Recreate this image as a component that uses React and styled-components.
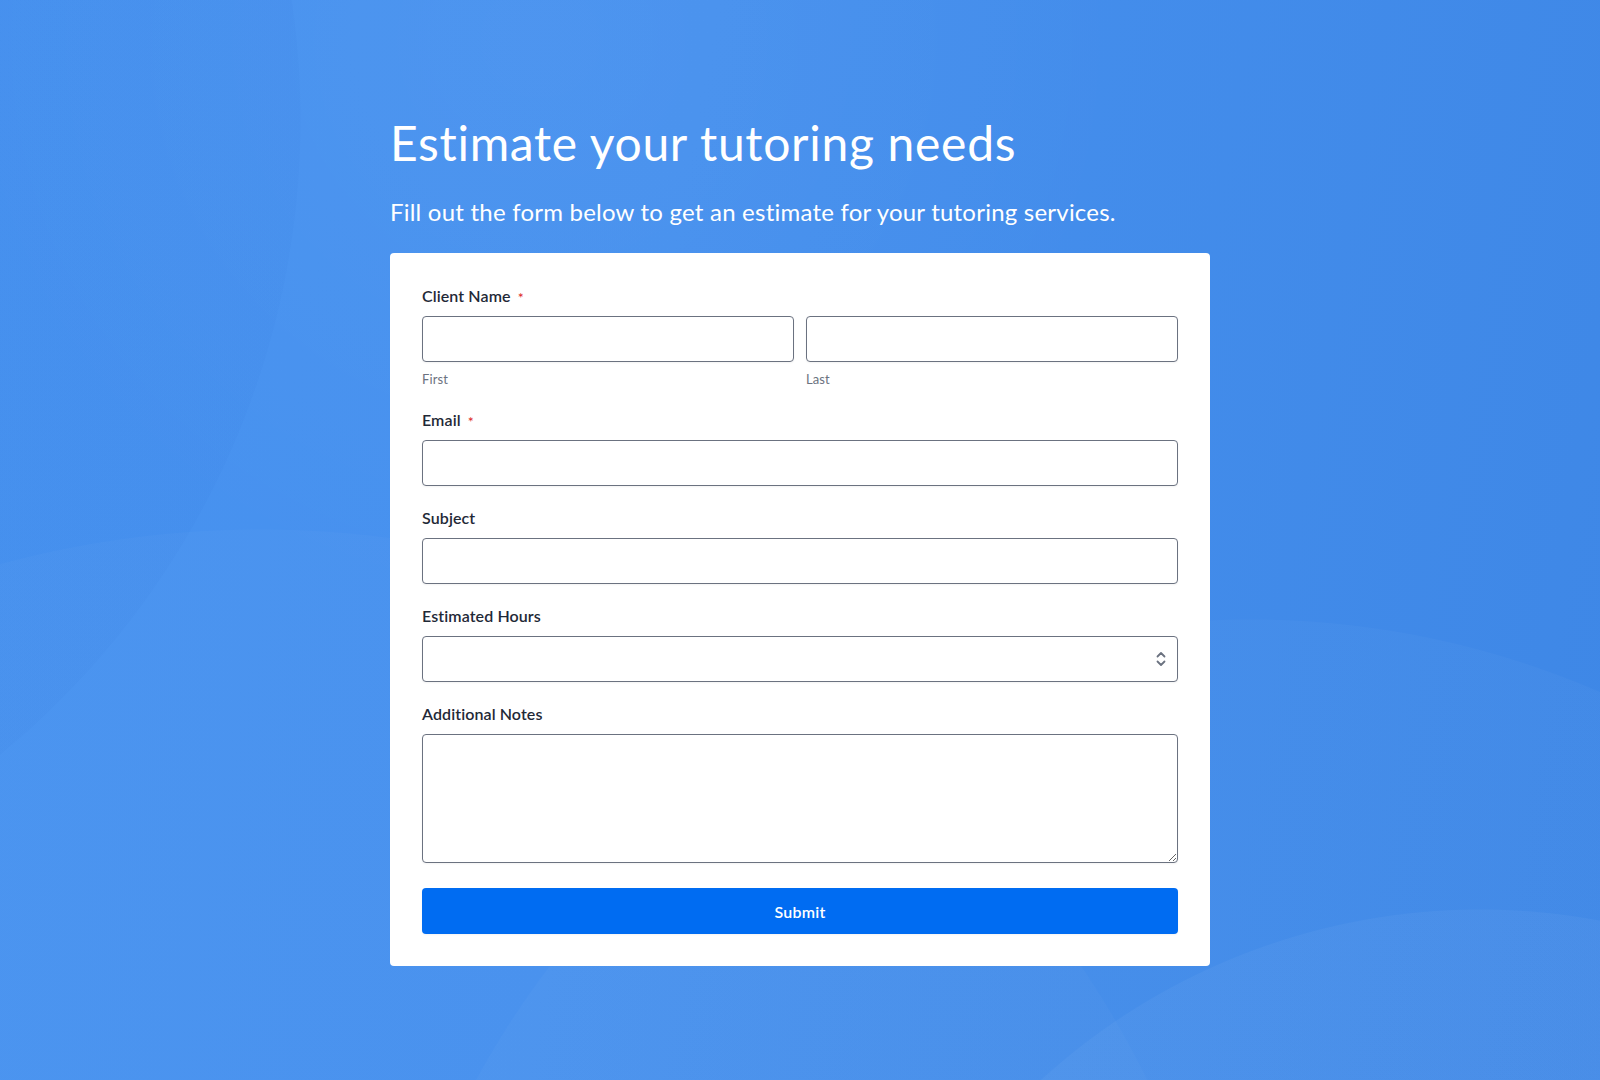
import React from 'react';
import styled, { createGlobalStyle } from 'styled-components';

const GlobalStyle = createGlobalStyle`
  * {
    box-sizing: border-box;
  }

  html, body {
    margin: 0;
    padding: 0;
  }

  body {
    font-family: Lato, "Noto Sans", sans-serif;
    -webkit-font-smoothing: antialiased;
  }
`;

const Page = styled.div`
  min-height: 1080px;
  padding: 114px 0 80px;
  background-color: #4690ee;
  background-image:
    radial-gradient(circle at 1480px 1560px, rgba(255, 255, 255, 0.035) 0 650px, rgba(255, 255, 255, 0) 651px),
    radial-gradient(circle at 1250px 1500px, rgba(255, 255, 255, 0.025) 0 880px, rgba(255, 255, 255, 0) 881px),
    radial-gradient(circle at 260px 1520px, rgba(255, 255, 255, 0.02) 0 990px, rgba(255, 255, 255, 0) 991px),
    radial-gradient(circle at -520px 120px, rgba(20, 80, 190, 0.035) 0 820px, rgba(0, 0, 0, 0) 821px),
    radial-gradient(ellipse at 540px 40px, rgba(255, 255, 255, 0.04) 0%, rgba(255, 255, 255, 0) 40%),
    linear-gradient(100deg, #4893f0 0%, #4690ee 40%, #3e87e6 100%);
`;

const Wrapper = styled.div`
  width: 820px;
  margin: 0 auto;
`;

const Title = styled.h1`
  margin: 0 0 26px;
  font-size: 48px;
  font-weight: 400;
  letter-spacing: 0.7px;
  line-height: normal;
  color: #ffffff;
`;

const Subtitle = styled.p`
  margin: 0 0 27px;
  font-size: 24px;
  font-weight: 400;
  letter-spacing: 0.22px;
  line-height: normal;
  color: #ffffff;
`;

const Card = styled.form`
  display: flex;
  flex-direction: column;
  gap: 20px;
  padding: 31px 32px 32px;
  background: #ffffff;
  border-radius: 4px;
`;

const Field = styled.div`
  display: flex;
  flex-direction: column;
  gap: 8px;
`;

const Label = styled.label`
  display: flex;
  align-items: center;
  height: 24px;
  font-size: 16px;
  font-weight: 600;
  letter-spacing: 0.1px;
  line-height: 24px;
  color: #1f2937;
`;

const Required = styled.span`
  margin-left: 7px;
  font-size: 14px;
  font-weight: 400;
  color: #dc2626;
  transform: translateY(2px);
`;

const NameRow = styled.div`
  display: grid;
  grid-template-columns: 1fr 1fr;
  gap: 12px;
`;

const NamePart = styled.div`
  display: flex;
  flex-direction: column;
  gap: 8px;
`;

const SubLabel = styled.span`
  font-size: 13px;
  letter-spacing: 0.1px;
  line-height: 18px;
  color: #6b7280;
`;

const Input = styled.input`
  width: 100%;
  height: 46px;
  padding: 0 12px;
  border: 1px solid #6b7280;
  border-radius: 4px;
  background: #ffffff;
  font-family: inherit;
  font-size: 16px;
  box-shadow: 0 1px 2px rgba(0, 0, 0, 0.05);
`;

const SelectBox = styled.div`
  position: relative;
`;

const Select = styled.select`
  width: 100%;
  height: 46px;
  padding: 0 36px 0 12px;
  border: 1px solid #6b7280;
  border-radius: 4px;
  background: #ffffff;
  font-family: inherit;
  font-size: 16px;
  appearance: none;
  box-shadow: 0 1px 2px rgba(0, 0, 0, 0.05);
`;

const SelectIcon = styled.svg`
  position: absolute;
  right: 12px;
  top: 50%;
  transform: translateY(-50%);
  pointer-events: none;
`;

const TextArea = styled.textarea`
  width: 100%;
  height: 129px;
  padding: 10px 12px;
  border: 1px solid #6b7280;
  border-radius: 4px;
  font-family: inherit;
  font-size: 16px;
  resize: vertical;
  display: block;
  box-shadow: 0 1px 2px rgba(0, 0, 0, 0.05);
`;

const SubmitButton = styled.button`
  height: 46px;
  margin-top: 5px;
  border: none;
  border-radius: 4px;
  background: #006cf2;
  color: #ffffff;
  font-family: inherit;
  font-size: 16px;
  font-weight: 600;
  letter-spacing: 0.2px;
  cursor: pointer;
  box-shadow: 0 1px 2px rgba(0, 0, 0, 0.05);
`;

function App() {
  return (
    <>
      <GlobalStyle />
      <Page>
        <Wrapper>
          <Title>Estimate your tutoring needs</Title>
          <Subtitle>Fill out the form below to get an estimate for your tutoring services.</Subtitle>

          <Card onSubmit={(e) => e.preventDefault()}>
            <Field>
              <Label>
                Client Name<Required>*</Required>
              </Label>
              <NameRow>
                <NamePart>
                  <Input type="text" />
                  <SubLabel>First</SubLabel>
                </NamePart>
                <NamePart>
                  <Input type="text" />
                  <SubLabel>Last</SubLabel>
                </NamePart>
              </NameRow>
            </Field>

            <Field>
              <Label>
                Email<Required>*</Required>
              </Label>
              <Input type="email" />
            </Field>

            <Field>
              <Label>Subject</Label>
              <Input type="text" />
            </Field>

            <Field>
              <Label>Estimated Hours</Label>
              <SelectBox>
                <Select defaultValue="">
                  <option value=""></option>
                  <option value="1-5">1-5</option>
                  <option value="6-10">6-10</option>
                  <option value="11+">11+</option>
                </Select>
                <SelectIcon width="10" height="16" viewBox="0 0 10 16" fill="none">
                  <path d="M1.5 5.5 5 2l3.5 3.5M1.5 10.5 5 14l3.5-3.5" stroke="#6b7280" strokeWidth="1.8" strokeLinecap="round" strokeLinejoin="round" />
                </SelectIcon>
              </SelectBox>
            </Field>

            <Field>
              <Label>Additional Notes</Label>
              <TextArea />
            </Field>

            <SubmitButton type="submit">Submit</SubmitButton>
          </Card>
        </Wrapper>
      </Page>
    </>
  );
}

export default App;
